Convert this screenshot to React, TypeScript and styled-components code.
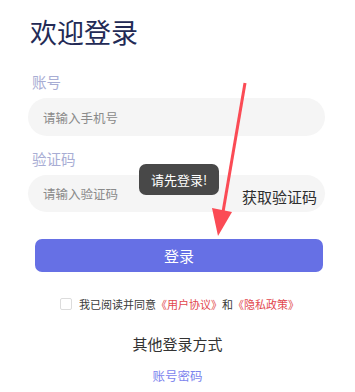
import React, { useState } from 'react';
import styled, { createGlobalStyle } from 'styled-components';

const GlobalStyle = createGlobalStyle`
  html, body {
    margin: 0;
    padding: 0;
    background: #ffffff;
    font-family: "Noto Sans CJK SC", "Noto Sans", sans-serif;
  }
  * {
    box-sizing: border-box;
  }
`;

const Page = styled.div`
  position: relative;
  width: 355px;
  height: 392px;
  overflow: hidden;
  padding: 16px 30px 0 28px;
`;

const Title = styled.h1`
  margin: 0 0 0 2px;
  font-size: 27px;
  line-height: 32px;
  font-weight: 400;
  color: #232a55;
`;

const Label = styled.div<{ $top: number }>`
  margin: ${(p) => p.$top}px 0 0 4px;
  font-size: 14.5px;
  line-height: 20px;
  color: #a8add4;
`;

const Field = styled.div<{ $height: number }>`
  display: flex;
  align-items: center;
  margin-top: 6px;
  height: ${(p) => p.$height}px;
  padding: 0 8px 0 15px;
  border-radius: 19px;
  background: #f5f5f5;
`;

const Input = styled.input`
  flex: 1;
  min-width: 0;
  border: none;
  outline: none;
  background: transparent;
  padding: 0;
  font-family: inherit;
  font-size: 12.5px;
  color: #333;

  &::placeholder {
    color: #8a8a8a;
  }
`;

const CodeButton = styled.span`
  font-size: 15px;
  color: #2e2e2e;
  margin-top: 6px;
`;

const LoginButton = styled.button`
  display: block;
  width: 288px;
  height: 33px;
  margin: 27px 0 0 7px;
  border: none;
  border-radius: 7px;
  background: #6670e5;
  color: #fff;
  font-family: inherit;
  font-size: 15px;
`;

const AgreeRow = styled.label`
  display: flex;
  align-items: center;
  margin: 24px 0 0 32px;
  font-size: 11px;
  color: #3a3a3a;
  white-space: nowrap;
`;

const Check = styled.span`
  width: 12px;
  height: 12px;
  border: 1px solid #dcdcdc;
  border-radius: 2px;
  margin-right: 7px;
  background: #fff;
`;

const Link = styled.span`
  color: #e2474d;
`;

const OtherTitle = styled.div`
  margin-top: 22px;
  text-align: center;
  font-size: 15px;
  line-height: 20px;
  color: #333;
  padding-left: 2px;
`;

const OtherLink = styled.div`
  margin-top: 13px;
  text-align: center;
  font-size: 12.5px;
  line-height: 18px;
  color: #7c84ee;
  padding-left: 2px;
`;

const Toast = styled.div`
  position: absolute;
  left: 139px;
  top: 164px;
  width: 80px;
  height: 31px;
  border-radius: 7px;
  background: #484848;
  color: #fff;
  font-size: 13px;
  display: flex;
  align-items: center;
  justify-content: center;
`;

const ArrowLayer = styled.svg`
  position: absolute;
  left: 0;
  top: 0;
  pointer-events: none;
`;

export default function App() {
  const [phone, setPhone] = useState('');
  const [code, setCode] = useState('');

  return (
    <>
      <GlobalStyle />
      <Page>
        <Title>欢迎登录</Title>
        <Label $top={24}>账号</Label>
        <Field $height={38}>
          <Input placeholder="请输入手机号" value={phone} onChange={(e) => setPhone(e.target.value)} />
        </Field>
        <Label $top={13}>验证码</Label>
        <Field $height={37}>
          <Input placeholder="请输入验证码" value={code} onChange={(e) => setCode(e.target.value)} />
          <CodeButton>获取验证码</CodeButton>
        </Field>
        <LoginButton>登录</LoginButton>
        <AgreeRow>
          <Check />
          我已阅读并同意<Link>《用户协议》</Link>和<Link>《隐私政策》</Link>
        </AgreeRow>
        <OtherTitle>其他登录方式</OtherTitle>
        <OtherLink>账号密码</OtherLink>

        <Toast>请先登录!</Toast>
        <ArrowLayer width="355" height="392" viewBox="0 0 355 392">
          <line x1="245" y1="83" x2="223" y2="212" stroke="#fb4b55" strokeWidth="3" />
          <polygon points="212,208 232,212 218,236" fill="#fb4b55" />
        </ArrowLayer>
      </Page>
    </>
  );
}
